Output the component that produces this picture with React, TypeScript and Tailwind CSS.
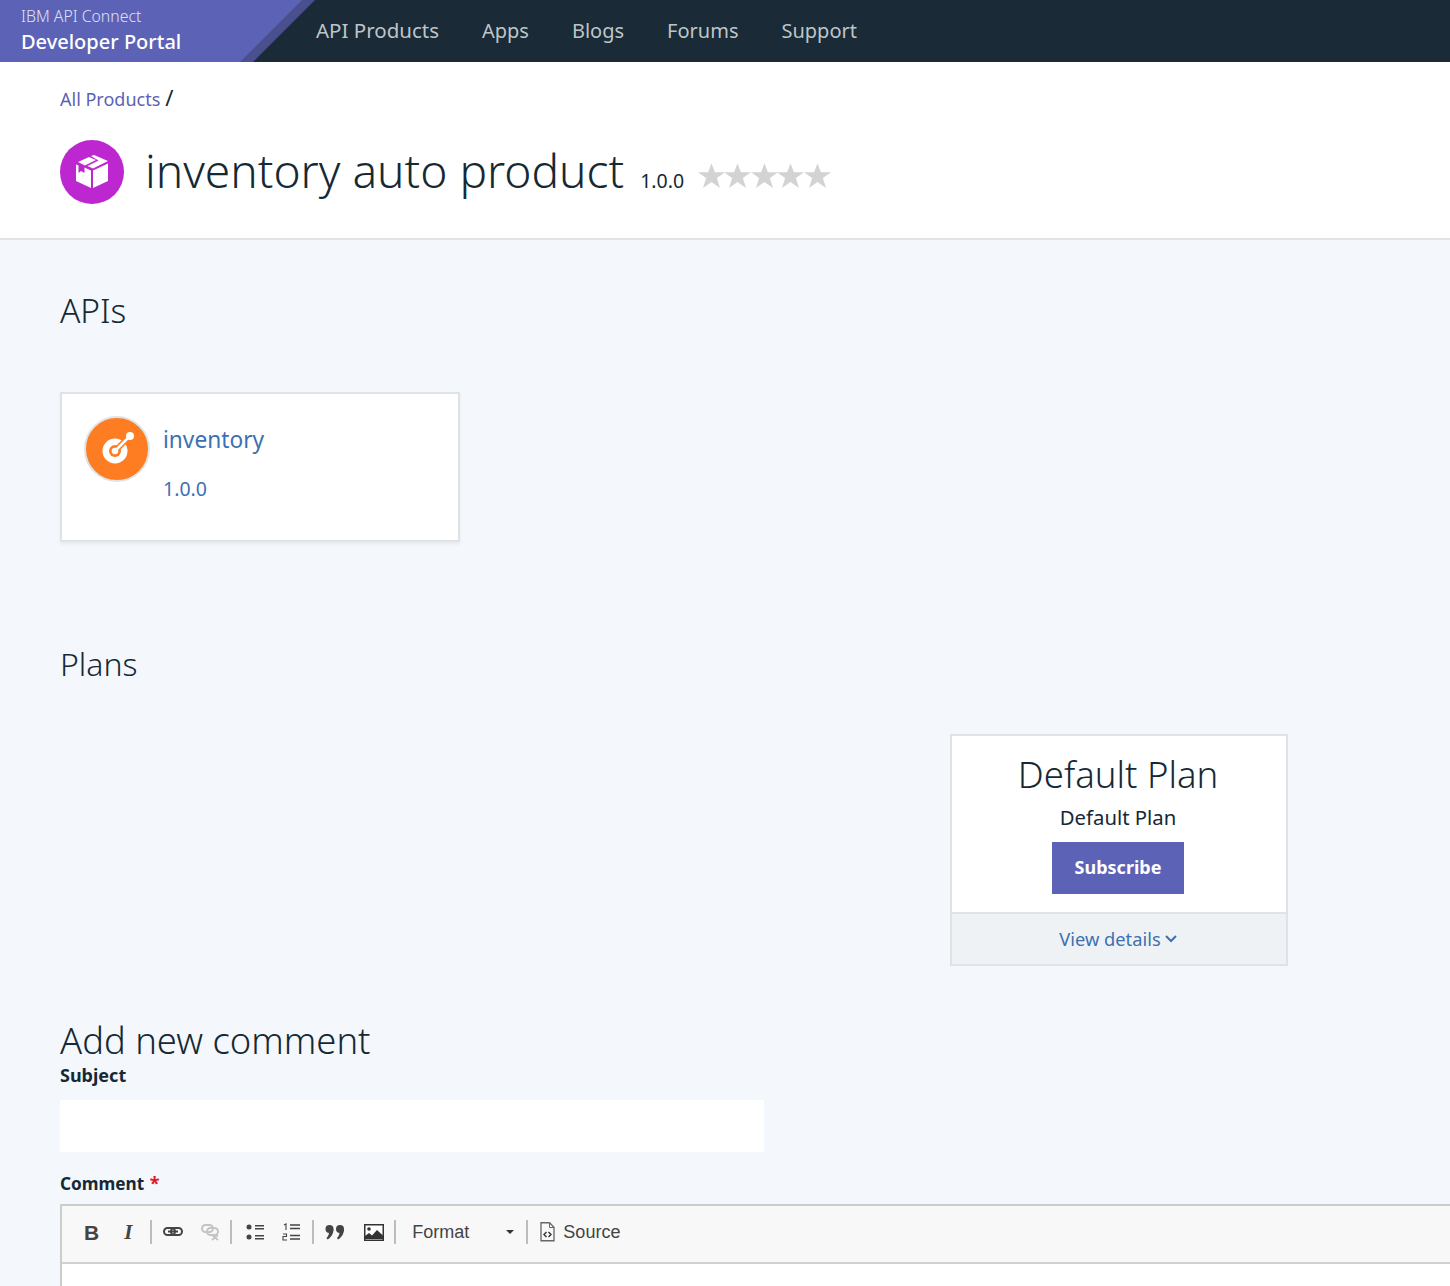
import React from 'react';

const font = { fontFamily: '"Noto Sans", "Open Sans", sans-serif' };

function NavLink({ label, className }: { label: string; className: string }) {
  return (
    <a href="#" className={`leading-[61px] text-[#bec5c9] ${className}`}>
      {label}
    </a>
  );
}

function Star() {
  return (
    <svg width="27" height="27" viewBox="0 0 24 24" className="-mr-[0.6px] fill-[#d3d3d3]">
      <path d="M12 1l3 8h9l-7.200 5.300L19.500 23 12 17.700 4.500 23l2.700-8.700L0 9h9z" />
    </svg>
  );
}

function ProductIcon() {
  return (
    <div className="flex h-16 w-16 shrink-0 items-center justify-center rounded-full bg-[#bd27cf]">
      <svg width="32" height="34" viewBox="0 0 32 34" fill="#fff">
        <path d="M0 9.500L2.500 10.500V18L5 16L8.500 18V12.500L15 15.500V33L0 26Z" />
        <path d="M2 7L13 2L20 5L9 10.500Z" />
        <path d="M15 1L18 0L32 6L17 13.500L11.500 11L22.500 5.500Z" />
        <path d="M17 15.500L32 8.500V26L17 33Z" />
      </svg>
    </div>
  );
}

function ApiIcon() {
  return (
    <div className="flex h-[66px] w-[66px] shrink-0 items-center justify-center rounded-full border-2 border-[#dfe3e6] bg-[#ff7d22]">
      <svg width="36" height="36" viewBox="0 0 36 36" fill="none">
        <circle cx="16" cy="20" r="12.500" fill="#fff" />
        <path d="M16 20L32 4" stroke="#ff7d22" strokeWidth="6" />
        <circle cx="16" cy="20" r="6" fill="#ff7d22" />
        <circle cx="16" cy="20" r="3.300" fill="#fff" />
        <path d="M16 20L31 5" stroke="#fff" strokeWidth="2.500" />
        <circle cx="31" cy="5" r="4" fill="#fff" />
      </svg>
    </div>
  );
}

function ToolSep({ className }: { className: string }) {
  return <span className={`h-6 w-[2px] shrink-0 bg-[#bcbcbc] ${className}`} />;
}

function LinkIcon({ off }: { off?: boolean }) {
  const c = off ? '#c4c4c4' : '#444';
  return (
    <svg width="20" height="18" viewBox="0 0 20 18" fill="none" stroke={c} strokeWidth="2">
      <rect x="1" y={off ? 2 : 5} width="11" height="7" rx="3.500" />
      <rect x={off ? 6 : 8} y="5" width="11" height="7" rx="3.500" />
      {off ? <path d="M11 12l6 5m0-5l-6 5" strokeWidth="1.800" /> : <path d="M5 8.500h10" />}
    </svg>
  );
}

function BulletIcon() {
  return (
    <svg width="18" height="16" viewBox="0 0 18 16" fill="#444">
      <circle cx="3" cy="3" r="2.500" />
      <circle cx="3" cy="13" r="2.500" />
      <path d="M9 1h9v1.500H9zM9 4h9v1.500H9zM9 11h9v1.500H9zM9 14h9v1.500H9z" />
    </svg>
  );
}

function NumberIcon() {
  return (
    <svg width="18" height="18" viewBox="0 0 18 18" fill="none" stroke="#444">
      <path d="M2 2l2-1v6M1 11h3.500v2.500H1V17h4" strokeWidth="1.100" />
      <path d="M8 2h10M8 5.500h10M8 12.500h10M8 16h10" strokeWidth="1.500" />
    </svg>
  );
}

function QuoteIcon() {
  return (
    <svg width="20" height="16" viewBox="0 0 20 16" fill="#444">
      <circle cx="4.500" cy="5" r="4" />
      <circle cx="15" cy="5" r="4" />
      <path d="M8.500 5c0 5-2.500 8.500-6 10.500L1.500 14c2-2 2.500-4 2.500-6zM19 5c0 5-2.500 8.500-6 10.500L12 14c2-2 2.500-4 2.500-6z" />
    </svg>
  );
}

function ImageIcon() {
  return (
    <svg width="20" height="17" viewBox="0 0 20 17">
      <rect x=".75" y=".75" width="18.500" height="15.500" fill="#fff" stroke="#333" strokeWidth="1.500" />
      <circle cx="5" cy="5" r="1.800" fill="#333" />
      <path d="M1 15v-3l4-3 3 2.500L13 6l6 5.500V15z" fill="#333" />
    </svg>
  );
}

function SourceIcon() {
  return (
    <svg width="15" height="20" viewBox="0 0 15 20" fill="none" stroke="#666">
      <path d="M1 .75h8.500l4.500 4.500v13.500H1z" strokeWidth="1.300" />
      <path d="M9.500 1v4.500H14" strokeWidth="1" />
      <path d="M6.500 10l-2.500 2.500 2.500 2.500M8.500 10l2.500 2.500-2.500 2.500" stroke="#333" strokeWidth="1.400" />
    </svg>
  );
}

export default function App() {
  return (
    <div className="h-[1286px] overflow-hidden bg-[#f4f7fb] text-[#152935]" style={font}>
      {/* Header */}
      <header className="flex h-[62px] bg-[#1a2a36]">
        <div className="h-full w-[315px] bg-[#4a4f8e] [clip-path:polygon(0_0,100%_0,253px_100%,0_100%)]">
          <div className="flex h-full w-[302px] flex-col bg-[#5c62b5] pl-[21px] pt-[6px] [clip-path:polygon(0_0,100%_0,240px_100%,0_100%)]">
            <span className="text-[15.800px] font-light leading-[20px] text-[#dfe1f2]">IBM API Connect</span>
            <span className="mt-[1px] text-[20px] font-medium leading-[30px] text-white">Developer Portal</span>
          </div>
        </div>
        <nav className="ml-px flex gap-[43px]">
          <NavLink label="API Products" className="text-[20.500px]" />
          <NavLink label="Apps" className="text-[20px]" />
          <NavLink label="Blogs" className="text-[20px]" />
          <NavLink label="Forums" className="text-[20px]" />
          <NavLink label="Support" className="text-[20px]" />
        </nav>
      </header>

      {/* Product title */}
      <section className="h-[178px] border-b-2 border-[#dfe3e6] bg-white pl-[60px] pt-[24px]">
        <div className="text-[18px] leading-[26px]">
          <a href="#" className="text-[#5c62b5]">All Products</a>
          <span className="ml-[5px] text-[22px] leading-[22px]">/</span>
        </div>
        <div className="mt-[28px] flex items-center">
          <ProductIcon />
          <h1 className="-mt-[2px] ml-[21px] text-[46.100px] font-light leading-[64px]">inventory auto product</h1>
          <span className="ml-[16px] mt-[18px] text-[19.500px]">1.0.0</span>
          <div className="ml-[14px] mt-[7px] flex">
            <Star />
            <Star />
            <Star />
            <Star />
            <Star />
          </div>
        </div>
      </section>

      {/* Content */}
      <main className="pl-[60px]">
        <h2 className="pt-[49px] text-[33.500px] font-light leading-[42px]">APIs</h2>
        <div className="mt-[61px] flex h-[150px] w-[400px] gap-[13px] border-2 border-[#dfe3e6] bg-white pl-[22px] pt-[22px] shadow-[0_2px_3px_rgba(0,0,0,0.06)]">
          <ApiIcon />
          <div className="text-[#3d70b2]">
            <div className="mt-[4px] text-[22.700px] leading-[40px]">inventory</div>
            <div className="mt-[16px] text-[19.500px] leading-[26px]">1.0.0</div>
          </div>
        </div>

        <h2 className="mt-[101px] text-[32px] font-light leading-[42px]">Plans</h2>

        <div className="ml-[890px] mt-[49px] w-[338px] border-2 border-[#dfe3e6] bg-white text-center">
          <div className="pr-[2px]">
            <div className="pt-[14px] text-[36.500px] font-light leading-[48px]">Default Plan</div>
            <div className="mt-[4px] text-[20.300px] leading-[30px]">Default Plan</div>
            <button className="mt-[10px] h-[52px] w-[132px] bg-[#5c62b5] pb-[2px] text-[18px] font-bold text-white">Subscribe</button>
          </div>
          <div className="mt-[18px] flex h-[52px] items-center justify-center gap-[4px] border-t-2 border-[#dfe3e6] bg-[#eff2f5] pr-[2px] text-[18.300px] text-[#3d70b2]">
            View details
            <svg width="12" height="8" viewBox="0 0 12 8" fill="none" stroke="#3d70b2" strokeWidth="2">
              <path d="M1 1l5 5 5-5" />
            </svg>
          </div>
        </div>

        <h2 className="mt-[49px] text-[36.400px] font-light leading-[50px]">Add new comment</h2>
        <label className="-mt-[3px] block text-[18px] font-bold leading-[26px]">Subject</label>
        <div className="mt-[12px] h-[52px] w-[704px] bg-white" />
        <label className="mt-[18px] block text-[17.200px] font-bold leading-[26px]">
          Comment <span className="ml-[1px] text-[18px] text-[#e0182d]">*</span>
        </label>

        {/* Editor toolbar */}
        <div className="mt-[7px] w-[1500px] border-2 border-b-0 border-[#cccccc] bg-white">
          <div className="flex h-[58px] items-center border-b-2 border-[#d1d1d1] bg-[#f8f8f8] pb-[4px] text-[#444]" style={{ fontFamily: '"Liberation Sans", sans-serif' }}>
            <span className="ml-[22px] text-[21px] font-bold leading-none">B</span>
            <span className="ml-[25px] text-[21px] font-bold italic leading-none" style={{ fontFamily: '"Liberation Serif", serif' }}>I</span>
            <ToolSep className="ml-[18px]" />
            <span className="ml-[11px] flex"><LinkIcon /></span>
            <span className="ml-[18px] flex"><LinkIcon off /></span>
            <ToolSep className="ml-[9px]" />
            <span className="ml-[14px] flex"><BulletIcon /></span>
            <span className="ml-[18px] flex"><NumberIcon /></span>
            <ToolSep className="ml-[12px]" />
            <span className="ml-[11px] flex"><QuoteIcon /></span>
            <span className="ml-[19px] flex"><ImageIcon /></span>
            <ToolSep className="ml-[10px]" />
            <span className="ml-[16px] w-[94px] text-[18px]">Format</span>
            <span className="h-0 w-0 border-x-[4px] border-t-[4px] border-x-transparent border-t-[#333]" />
            <ToolSep className="ml-[12px]" />
            <span className="ml-[12px] flex"><SourceIcon /></span>
            <span className="ml-[8px] text-[18px]">Source</span>
          </div>
          <div className="h-[40px]" />
        </div>
      </main>
    </div>
  );
}
